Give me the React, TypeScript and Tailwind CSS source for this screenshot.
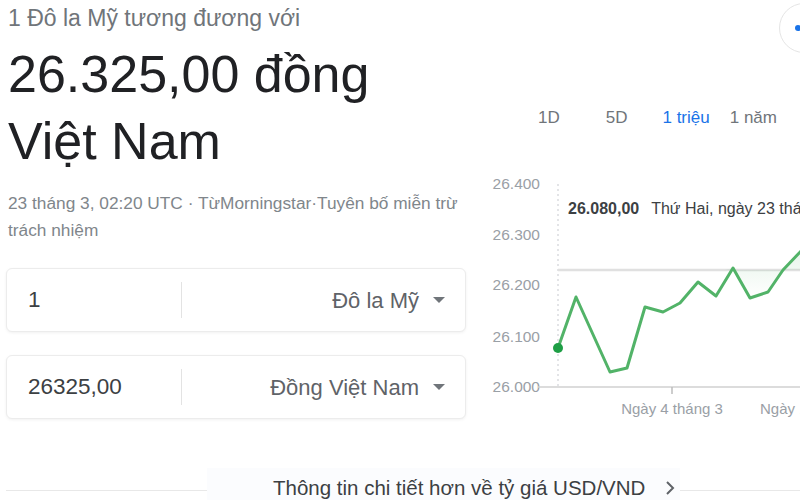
import React from 'react';

const points: [number, number][] = [
  [78, 178], [96, 127], [130, 202], [147, 198], [165, 137], [183, 142], [200, 133],
  [218, 112], [236, 126], [253, 98], [270, 128], [288, 122], [303, 100], [322, 80],
];

const yLabels = [
  { v: '26.400', y: 14 },
  { v: '26.300', y: 65 },
  { v: '26.200', y: 115 },
  { v: '26.100', y: 167 },
  { v: '26.000', y: 217 },
];

const ConverterBox = ({ value, currency }: { value: string; currency: string }) => (
  <div className="flex items-center h-[64px] w-[460px] rounded-md border border-[#ececec] shadow-[0_1px_3px_rgba(0,0,0,0.06)] bg-white">
    <div className="w-[174px] pl-[21px] text-[22.5px] text-[#3c4043]">{value}</div>
    <div className="w-px h-[36px] bg-[#e3e3e3]" />
    <div className="flex-1 flex items-center justify-end pr-[20px] gap-[14px]">
      <span className="text-[22px] text-[#5f6368]">{currency}</span>
      <svg width="12" height="6" viewBox="0 0 12 6">
        <path d="M0 0 L12 0 L6 6 Z" fill="#70757a" />
      </svg>
    </div>
  </div>
);

const Chart = () => {
  const line = points.map(([x, y]) => `${x},${y}`).join(' ');
  return (
    <svg width="320" height="250" viewBox="0 0 320 250" className="block overflow-visible" style={{ fontFamily: '"Liberation Sans", Arial, sans-serif' }}>
      <defs>
        <linearGradient id="fillg" x1="0" y1="0" x2="0" y2="1">
          <stop offset="0" stopColor="#34a853" stopOpacity="0.12" />
          <stop offset="1" stopColor="#34a853" stopOpacity="0" />
        </linearGradient>
      </defs>
      {yLabels.map((l) => (
        <text key={l.v} x="60" y={l.y + 5} textAnchor="end" fontSize="15.5" fill="#9aa0a6">
          {l.v}
        </text>
      ))}
      <line x1="78" y1="14" x2="78" y2="217" stroke="#dadce0" strokeWidth="1.5" strokeDasharray="2 3" />
      <line x1="78" y1="100" x2="320" y2="100" stroke="#e0e0e0" strokeWidth="2.5" />
      <path d="M253,98 L270,128 L288,122 L303,100 L322,80 L322,100 L245,100 Z" fill="url(#fillg)" />
      <line x1="58" y1="217" x2="320" y2="217" stroke="#d0d0d0" strokeWidth="1.5" />
      <line x1="192" y1="217" x2="192" y2="224" stroke="#bdbdbd" strokeWidth="1.5" />
      <polyline points={line} fill="none" stroke="#52b368" strokeWidth="3" strokeLinejoin="round" />
      <circle cx="78" cy="178" r="5" fill="#1e9e45" />
      <text x="88" y="44" fontSize="16" fontWeight="bold" fill="#3c4043">
        26.080,00
        <tspan dx="12" fontWeight="normal">Thứ Hai, ngày 23 tháng 3</tspan>
      </text>
      <text x="192" y="244" textAnchor="middle" fontSize="15" fill="#9aa0a6">
        Ngày 4 tháng 3
      </text>
      <text x="280" y="244" fontSize="15" fill="#9aa0a6">
        Ngày 11 tháng 3
      </text>
    </svg>
  );
};

export default function App() {
  return (
    <div className="relative w-[800px] h-[500px] overflow-hidden bg-white font-['Liberation_Sans',Arial,sans-serif]">
      <div className="flex items-start">
        {/* Left: result + converter */}
        <div className="w-[480px] shrink-0">
          <div className="pl-2 pt-1 text-[23px] leading-[28px] text-[#70757a]">1 Đô la Mỹ tương đương với</div>
          <div className="pl-2 mt-[9px] text-[52px] leading-[67px] text-[#202124]">
            26.325,00 đồng
            <br />
            Việt Nam
          </div>
          <div className="pl-2 mt-[15px] w-[472px] text-[17.3px] leading-[27px] text-[#80868b]">
            23 tháng 3, 02:20 UTC · TừMorningstar·Tuyên bố miễn trừ trách nhiệm
          </div>
          <div className="pl-[6px] mt-[24px] flex flex-col gap-[23px]">
            <ConverterBox value="1" currency="Đô la Mỹ" />
            <ConverterBox value="26325,00" currency="Đồng Việt Nam" />
          </div>
        </div>

        {/* Right: chart */}
        <div className="w-[320px] shrink-0 pt-[108px]">
          <div className="flex items-center h-[20px] text-[17px] text-[#70757a]">
            <span className="ml-[58px]">1D</span>
            <span className="ml-[46px]">5D</span>
            <span className="ml-[35px] text-[#1a73e8]">1 triệu</span>
            <span className="ml-[20px]">1 năm</span>
          </div>
          <div className="mt-[42px]">
            <Chart />
          </div>
        </div>
      </div>

      {/* Bottom link */}
      <div className="absolute left-0 right-0 top-[468px] flex items-center h-[40px]">
        <div className="ml-[6px] w-[201px] shrink-0 h-px bg-[#e8e8e8] mt-[4px]" />
        <div className="w-[473px] shrink-0 h-full bg-[#fbfcfe] flex items-center pl-[66px] gap-[20px]">
          <span className="whitespace-nowrap text-[20.5px] text-[#3c4043]">Thông tin chi tiết hơn về tỷ giá USD/VND</span>
          <svg width="10" height="14" viewBox="0 0 10 14" className="shrink-0">
            <path d="M2 1 L8 7 L2 13" fill="none" stroke="#5f6368" strokeWidth="2" />
          </svg>
        </div>
        <div className="flex-1 h-px bg-[#e8e8e8] mt-[4px]" />
      </div>

      {/* Top-right round button */}
      <div className="absolute left-[779px] top-[3px] w-[50px] h-[50px] rounded-full border border-[#e5e5e5] bg-white flex items-center pl-[15px]">
        <div className="w-[6px] h-[6px] rounded-full bg-[#1a73e8]" />
      </div>
    </div>
  );
}
